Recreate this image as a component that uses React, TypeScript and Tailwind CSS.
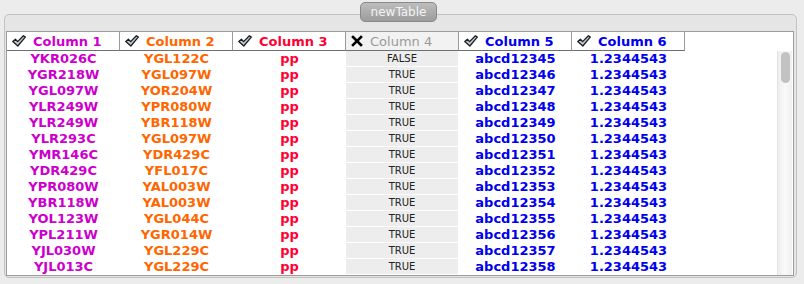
import React from "react";

const col1 = ["YKR026C", "YGR218W", "YGL097W", "YLR249W", "YLR249W", "YLR293C", "YMR146C", "YDR429C", "YPR080W", "YBR118W", "YOL123W", "YPL211W", "YJL030W", "YJL013C"];
const col2 = ["YGL122C", "YGL097W", "YOR204W", "YPR080W", "YBR118W", "YGL097W", "YDR429C", "YFL017C", "YAL003W", "YAL003W", "YGL044C", "YGR014W", "YGL229C", "YGL229C"];

const rows = col1.map((c, i) => ({
  c1: c,
  c2: col2[i],
  c3: "pp",
  c4: i === 0 ? "FALSE" : "TRUE",
  c5: "abcd" + (12345 + i),
  c6: "1.2344543",
}));

const Check = () => (
  <svg width="14" height="12" viewBox="0 0 14 12" className="shrink-0">
    <path d="M0.8 6.4 L3.4 4.2 L5.6 6.6 L11.4 0.7 L13.3 2.1 L5.8 11 Z" fill="#b9c8d6" stroke="#1e1e1e" strokeWidth="1.3" strokeLinejoin="round" />
  </svg>
);

const Cross = () => (
  <svg width="12" height="12" viewBox="0 0 12 12" className="shrink-0">
    <path d="M2 2 L10 10 M10 2 L2 10" stroke="#000" strokeWidth="2.6" strokeLinecap="square" />
  </svg>
);

const headers = [
  { label: "Column 1", color: "text-[#cc00cc]", on: true },
  { label: "Column 2", color: "text-[#ff6600]", on: true },
  { label: "Column 3", color: "text-[#ff0033]", on: true },
  { label: "Column 4", color: "text-[#9a9a9a]", on: false },
  { label: "Column 5", color: "text-[#0000ee]", on: true },
  { label: "Column 6", color: "text-[#0000ee]", on: true },
];

export default function App() {
  return (
    <div className="w-[804px] h-[284px] bg-[#ececec] pt-[14px] overflow-hidden" style={{ fontFamily: '"DejaVu Sans", sans-serif' }}>
      <div className="relative ml-[4px] w-[793px] h-[264px] border border-[#c2c2c2] rounded-[5px] bg-[#e5e5e5] pt-[16px] pl-[1px]">
        {/* tab title */}
        <div className="absolute left-[355px] top-[-13px] w-[77px] h-[20px] rounded-[5px] border border-[#8a8a8a] bg-gradient-to-b from-[#bdbdbd] to-[#9c9c9c] flex items-center justify-center text-[12px] text-[#f4f4f4]">
          newTable
        </div>

        <div className="w-[788px] h-[245px] border border-[#9c9c9c] bg-white flex flex-col">
          {/* header */}
          <div className="flex h-[19px] shrink-0">
            {headers.map((h, i) => (
              <div
                key={i}
                className={`w-[113px] h-[19px] flex items-center gap-[7px] pl-[5px] border-r border-b border-r-[#9a9a9a] border-b-[#6f6f6f] ${h.on ? "bg-white font-bold" : "bg-[#f2f2f2]"} ${h.color} text-[13px] leading-none`}
              >
                {h.on ? <Check /> : <Cross />}
                <span>{h.label}</span>
              </div>
            ))}
          </div>

          {/* body */}
          <div className="flex flex-1 overflow-hidden">
            <div className="w-[770px] overflow-hidden">
              {rows.map((r, i) => (
                <div key={i} className="flex h-[16px] text-[13px] leading-[16px] font-bold">
                  <div className="w-[113px] text-center text-[#cc00cc]">{r.c1}</div>
                  <div className="w-[113px] text-center text-[#ff6600]">{r.c2}</div>
                  <div className="w-[113px] text-center text-[#ff0033]">{r.c3}</div>
                  <div className="w-[112px] mr-[1px] h-[16px] border-b border-white bg-[#ededed] text-center font-normal text-[10px] leading-[15px] text-[#222]">
                    {r.c4}
                  </div>
                  <div className="w-[113px] text-center text-[#0000ee]">{r.c5}</div>
                  <div className="w-[113px] text-center text-[#0000ee]">{r.c6}</div>
                </div>
              ))}
            </div>
            {/* scrollbar */}
            <div className="w-[15px] bg-gradient-to-r from-[#eeeeee] via-[#fafafa] to-[#f0f0f0] border-l border-[#e2e2e2] pt-[1px] flex justify-center">
              <div className="w-[9px] h-[31px] rounded-full bg-[#c2c2c2]" />
            </div>
          </div>
        </div>
      </div>
    </div>
  );
}
